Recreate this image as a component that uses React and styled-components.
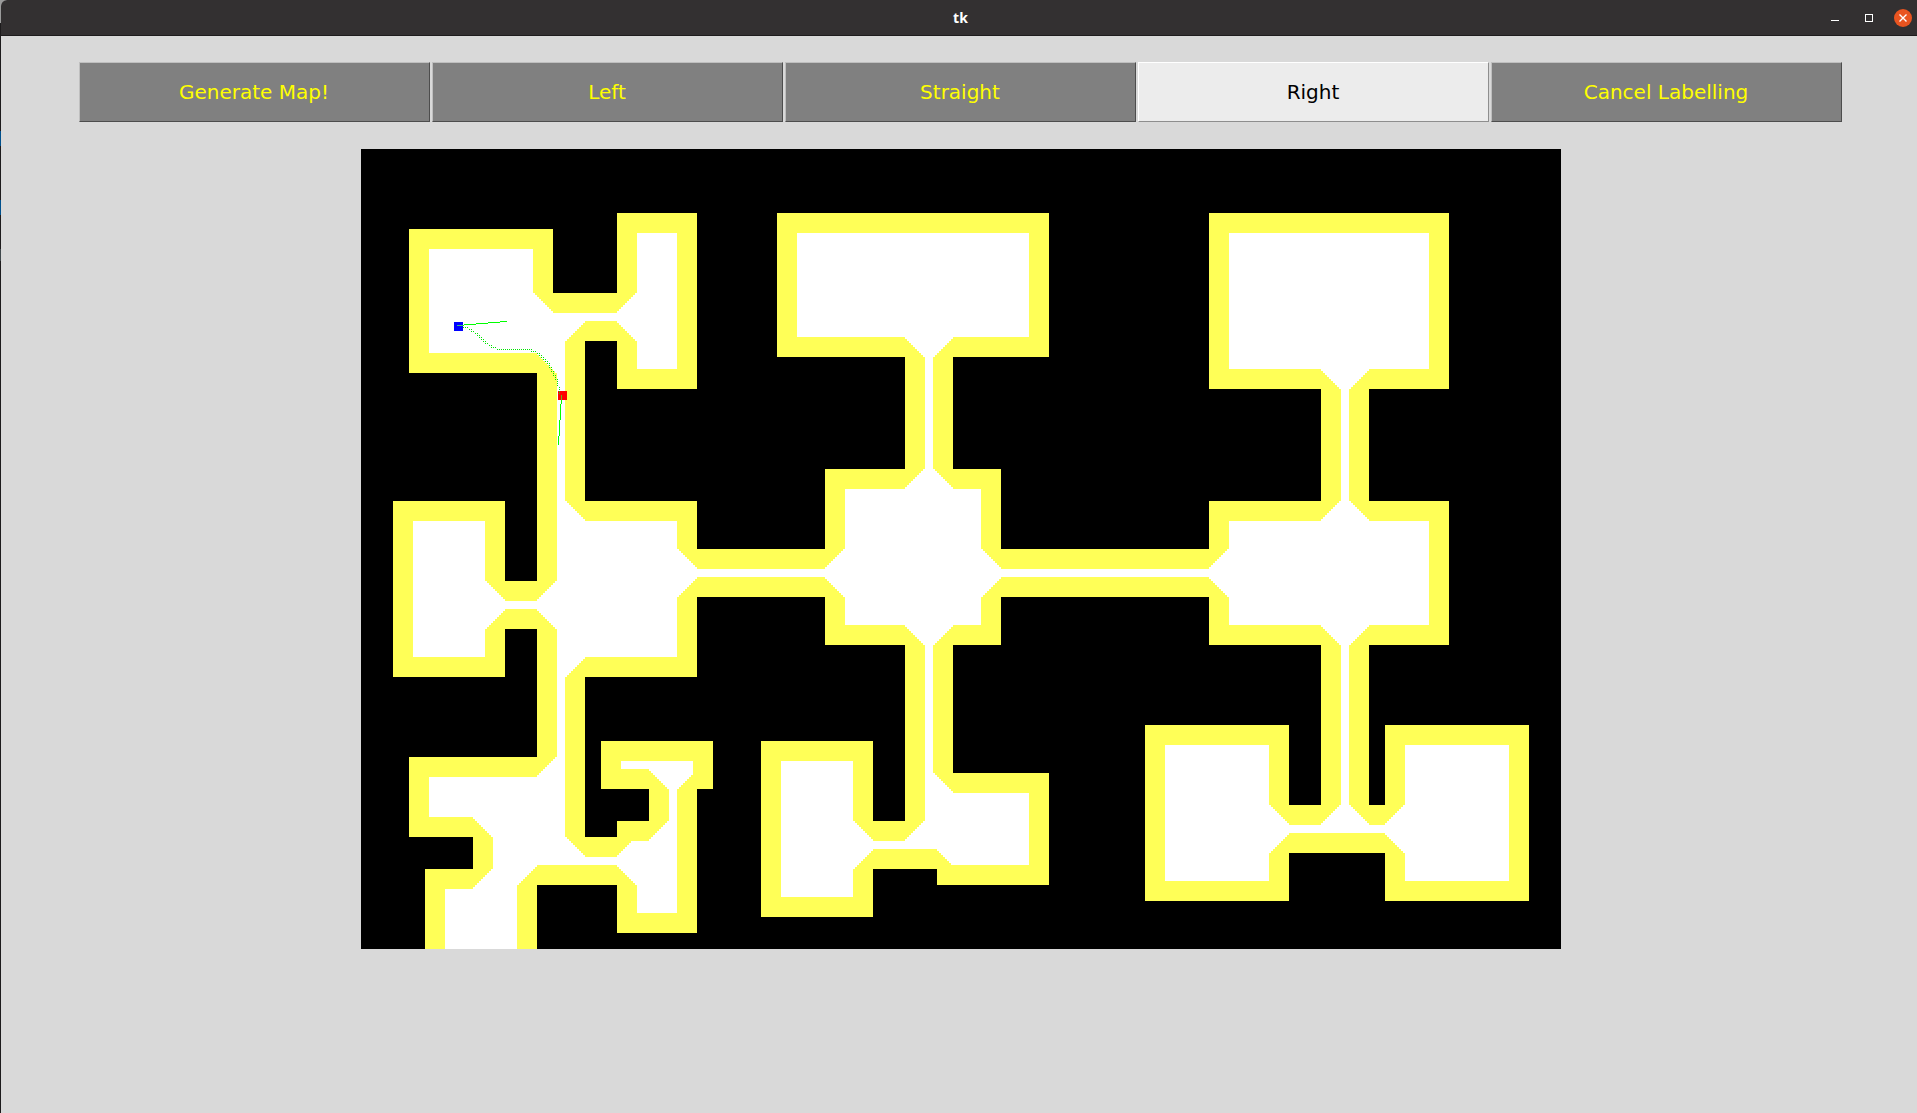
import React, { useMemo } from "react";
import styled, { createGlobalStyle } from "styled-components";

const GlobalStyle = createGlobalStyle`
  * { box-sizing: border-box; }
  html, body { margin: 0; padding: 0; background: #1d1b1c; overflow: hidden; }
`;

const Desktop = styled.div`
  width: 1917px;
  height: 1113px;
  padding-left: 1px;
  background: linear-gradient(#9b9b9b 0 23px, #1d1b1c 23px 131px, #00508c 131px 146px, #1d1b1c 146px 200px, #00508c 200px 215px, #1d1b1c 215px 249px, #40484c 249px 261px, #1d1b1c 261px);
`;

const Window = styled.div`
  display: flex;
  flex-direction: column;
  height: 100%;
  border-radius: 6px 0 0 0;
  overflow: hidden;
  background: #d9d9d9;
`;

const TitleBar = styled.header`
  display: grid;
  grid-template-columns: 1fr auto 1fr;
  align-items: center;
  flex: none;
  height: 36px;
  background: #333031;
  border-bottom: 1px solid #1e1c1d;
`;

const Title = styled.h1`
  grid-column: 2;
  margin: 0;
  padding-left: 3px;
  font: bold 14px/20px "Noto Sans", "Open Sans", sans-serif;
  color: #fff;
`;

const Controls = styled.div`
  display: flex;
  justify-content: flex-end;
  align-items: center;
`;

const Body = styled.main`
  display: flex;
  flex-direction: column;
  align-items: center;
  gap: 27px;
  padding: 26px 0 0 3px;
`;

const ButtonRow = styled.div`
  display: grid;
  grid-template-columns: repeat(5, 351px);
  column-gap: 2px;
`;

const TkButton = styled.button`
  height: 60px;
  margin: 0;
  padding: 0 1px 0 0;
  border: 1px solid;
  border-color: ${(p) => (p.$active ? "#fff #8e8e8e #8e8e8e #fff" : "#bfbfbf #4d4d4d #4d4d4d #bfbfbf")};
  background: ${(p) => (p.$active ? "#ececec" : "#808080")};
  color: ${(p) => (p.$active ? "#000" : "#ff0")};
  font: 20px/24px "DejaVu Sans", sans-serif;
`;

const MapSvg = styled.svg`
  display: block;
  width: 1200px;
  height: 800px;
  background: #000;
  shape-rendering: crispEdges;
`;

const CELL = 2;
const COLS = 600;
const ROWS = 400;
const WALL_MARGIN = 10;

/* Rooms and corridors as [left, top, right, bottom]. */
const FLOOR = [
  [48, 80, 192, 224], [256, 64, 336, 240], [176, 144, 256, 192],
  [176, 144, 224, 736], [32, 352, 144, 528], [144, 432, 176, 480],
  [176, 352, 336, 528], [336, 400, 464, 448], [48, 608, 224, 688],
  [112, 608, 224, 736], [64, 720, 176, 800], [176, 688, 256, 736],
  [256, 672, 336, 784], [288, 640, 336, 672], [240, 592, 352, 640],
  [416, 64, 688, 208], [544, 208, 592, 320], [464, 320, 640, 496],
  [544, 496, 592, 720], [400, 592, 512, 768], [512, 672, 576, 720],
  [576, 624, 688, 736], [640, 400, 848, 448], [848, 64, 1088, 240],
  [960, 240, 1008, 352], [848, 352, 1088, 496], [960, 496, 1008, 704],
  [784, 576, 928, 752], [928, 656, 1024, 704], [1024, 576, 1168, 752],
];

/* Cells further than the margin (Manhattan distance) from any wall. */
function freeSpacePath() {
  const dist = new Uint16Array(COLS * ROWS);
  FLOOR.forEach(([l, t, r, b]) => {
    for (let y = t / CELL; y < b / CELL; y++) {
      dist.fill(9999, y * COLS + l / CELL, y * COLS + r / CELL);
    }
  });
  const relax = (i, j) => {
    if (dist[j] + 1 < dist[i]) dist[i] = dist[j] + 1;
  };
  for (let y = 0; y < ROWS; y++) {
    for (let x = 0; x < COLS; x++) {
      const i = y * COLS + x;
      if (x > 0) relax(i, i - 1);
      if (y > 0) relax(i, i - COLS);
    }
  }
  for (let y = ROWS - 1; y >= 0; y--) {
    for (let x = COLS - 1; x >= 0; x--) {
      const i = y * COLS + x;
      if (x < COLS - 1) relax(i, i + 1);
      if (y < ROWS - 1) relax(i, i + COLS);
    }
  }
  let d = "";
  for (let y = 0; y < ROWS; y++) {
    let start = -1;
    for (let x = 0; x <= COLS; x++) {
      const free = x < COLS && dist[y * COLS + x] > WALL_MARGIN;
      if (free && start < 0) start = x;
      if (!free && start >= 0) {
        d += `M${start * CELL} ${y * CELL}H${x * CELL}v${CELL}H${start * CELL}z`;
        start = -1;
      }
    }
  }
  return d;
}

const floorPath = FLOOR.map(([l, t, r, b]) => `M${l} ${t}H${r}V${b}H${l}z`).join("");

const TRAIL = [
  [102, 178], [104, 178], [106, 178], [108, 180], [110, 180], [110, 182],
  [112, 182], [114, 184], [116, 184], [116, 186], [118, 186], [118, 188],
  [120, 188], [120, 190], [122, 190], [122, 192], [124, 192], [124, 194],
  [126, 194], [128, 196], [130, 196], [130, 198], [132, 198], [134, 198],
  ...Array.from({ length: 18 }, (_, i) => [136 + i * 2, 200]),
  [170, 202], [172, 202], [174, 202], [176, 204], [178, 204], [178, 206],
  [180, 206], [180, 208], [182, 208], [182, 210], [184, 210], [184, 212],
  [186, 212], [186, 214], [188, 214], [188, 216], [188, 218], [190, 218],
  [190, 220], [190, 222], [192, 222], [192, 224], [192, 226], [194, 226],
  [194, 228], [194, 230], [196, 230], [196, 232], [196, 234], [196, 236],
  [198, 238], [198, 240], [198, 242], [198, 244],
];

const HEADING = [
  [96, 176, 6, 1, "#40c080"], [102, 176, 1, 1], [103, 175, 12, 1], [115, 174, 12, 1],
  [127, 173, 12, 1], [139, 172, 7, 1],
  [200, 246, 1, 5, "#70b020"], [200, 251, 1, 4], [199, 255, 1, 16], [198, 271, 1, 16],
  [197, 287, 1, 9],
];

const BUTTONS = ["Generate Map!", "Left", "Straight", "Right", "Cancel Labelling"];

function RobotMap() {
  const free = useMemo(freeSpacePath, []);
  return (
    <MapSvg viewBox="0 0 1200 800">
      <path d={floorPath} fill="#ffff57" />
      <path d={free} fill="#fff" />
      <rect x="93" y="173" width="9" height="9" fill="#00f" />
      <rect x="197" y="242" width="9" height="9" fill="#f00" />
      {TRAIL.map(([x, y]) => (
        <rect key={`${x}-${y}`} x={x} y={y} width="1" height="1" fill="#00e600" />
      ))}
      {HEADING.map(([x, y, w, h, fill = "#0f0"]) => (
        <rect key={`${x}-${y}`} x={x} y={y} width={w} height={h} fill={fill} />
      ))}
    </MapSvg>
  );
}

export default function App() {
  return (
    <Desktop>
      <GlobalStyle />
      <Window>
        <TitleBar>
          <span />
          <Title>tk</Title>
          <Controls>
            <svg width="90" height="34" viewBox="0 0 90 34">
              <path d="M4 19.5h8" stroke="#fff" strokeWidth="1" shapeRendering="crispEdges" />
              <rect x="38.5" y="13.5" width="7" height="7" fill="none" stroke="#fff" />
              <circle cx="76" cy="17" r="9" fill="#e95420" />
              <path d="M72.5 13.5l7 7M79.5 13.5l-7 7" stroke="#fff" strokeWidth="1.4" />
            </svg>
          </Controls>
        </TitleBar>
        <Body>
          <ButtonRow>
            {BUTTONS.map((label) => (
              <TkButton key={label} type="button" $active={label === "Right"}>
                {label}
              </TkButton>
            ))}
          </ButtonRow>
          <RobotMap />
        </Body>
      </Window>
    </Desktop>
  );
}
